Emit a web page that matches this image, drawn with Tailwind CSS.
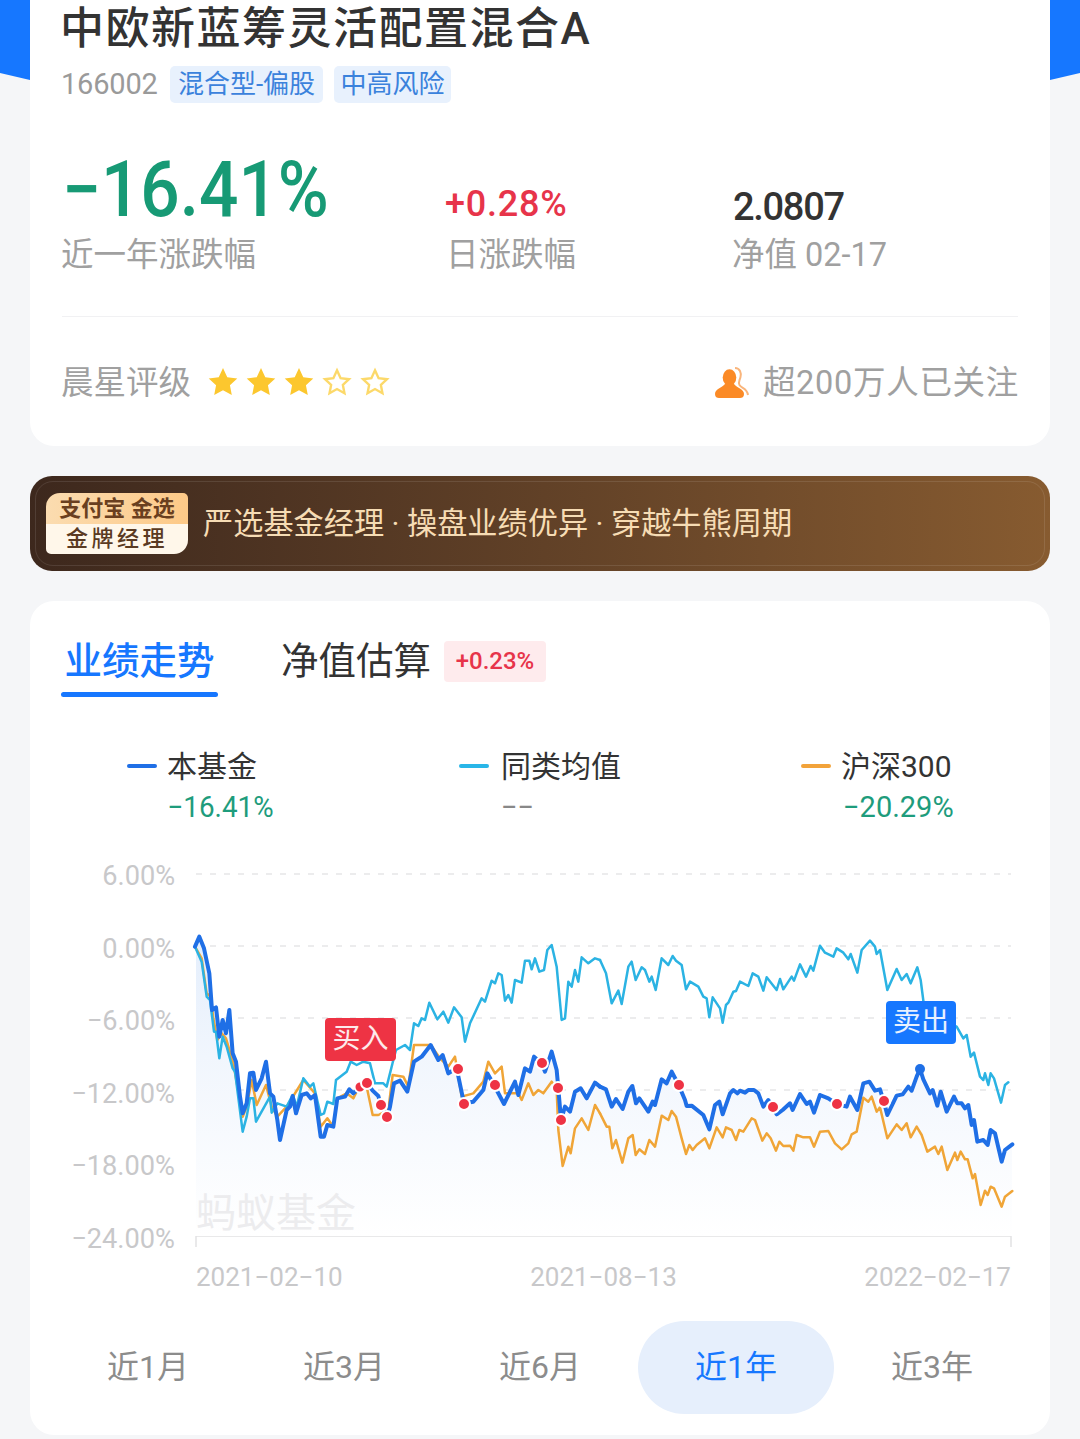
<!DOCTYPE html>
<html lang="zh-CN">
<head>
<meta charset="utf-8">
<script src="https://cdn.jsdelivr.net/npm/@tailwindcss/browser@4"></script>
</head>
<body class="m-0">
<div class="relative w-[1080px] h-[1439px] overflow-hidden bg-[#f5f6f8] font-['Roboto','Noto_Sans_CJK_SC',sans-serif] px-[30px]">
  <svg class="absolute left-0 top-0" width="1080" height="82" viewBox="0 0 1080 82"><polygon points="0,0 30,0 30,80 0,73" fill="#1677ff"/><polygon points="1050,0 1080,0 1080,73 1050,80" fill="#1677ff"/></svg>

  <section class="relative h-[446px] bg-white rounded-b-[24px] px-[32px]">
    <h1 class="h-[60px] leading-[58px] text-[44px] tracking-[1.5px] font-medium text-[#333] whitespace-nowrap -ml-[2px]">中欧新蓝筹灵活配置混合A</h1>
    <div class="flex items-center h-[37px] mt-[6px]">
      <span class="text-[29px] text-[#9a9a9a] w-[108px] -ml-[1px] mr-[1px] tracking-[-0.2px]">166002</span>
      <span class="h-[37px] w-[153px] leading-[37px] text-center rounded-[5px] bg-[#e8f1fd] text-[#3b82dc] text-[26px] whitespace-nowrap">混合型-偏股</span>
      <span class="h-[37px] w-[117px] leading-[37px] text-center ml-[11px] rounded-[5px] bg-[#e8f1fd] text-[#3b82dc] text-[26px] whitespace-nowrap">中高风险</span>
    </div>
    <div class="grid grid-cols-[384px_287px_1fr] items-end mt-[39px] h-[96px]">
      <div class="text-[77px] leading-[96px] font-medium text-[#179a75] whitespace-nowrap origin-left scale-x-90">−16.41%</div>
      <div class="text-[36px] leading-[60px] font-medium text-[#e7344a] pb-[4px] tracking-[0.8px] -ml-[1px]">+0.28%</div>
      <div class="text-[38px] leading-[60px] font-medium text-[#333] pb-[1px] tracking-[-1.300px]">2.0807</div>
    </div>
    <div class="grid grid-cols-[385px_286px_1fr] text-[32.500px] leading-[48px] text-[#a0a0a0] -mt-[7px] -ml-[1px]">
      <span class="whitespace-nowrap">近一年涨跌幅</span>
      <span class="whitespace-nowrap">日涨跌幅</span>
      <span class="whitespace-nowrap">净值 02-17</span>
    </div>
    <div class="h-px bg-[#f1f1f3] mt-[37px]"></div>
    <div class="flex items-center justify-between mt-[42px] h-[48px]">
      <div class="flex items-center">
        <span class="text-[32.500px] text-[#a0a0a0] w-[146px] whitespace-nowrap -ml-[1px]">晨星评级</span>
        <div class="flex gap-[6px] -mt-[3px]">
          <svg width="32" height="32" viewBox="0 0 24 24"><path d="M12 1.5l3.2 6.9 7.5.9-5.5 5.1 1.4 7.4L12 18.200l-6.600 3.600 1.400-7.400-5.500-5.100 7.500-.9z" fill="#fcc72e"/></svg>
          <svg width="32" height="32" viewBox="0 0 24 24"><path d="M12 1.5l3.2 6.9 7.5.9-5.500 5.100 1.400 7.400L12 18.200l-6.600 3.600 1.400-7.400-5.500-5.100 7.500-.9z" fill="#fcc72e"/></svg>
          <svg width="32" height="32" viewBox="0 0 24 24"><path d="M12 1.5l3.2 6.9 7.5.9-5.500 5.100 1.400 7.400L12 18.200l-6.600 3.600 1.400-7.400-5.500-5.100 7.500-.9z" fill="#fcc72e"/></svg>
          <svg width="32" height="32" viewBox="0 0 24 24"><path d="M12 3.200l2.700 5.900 6.300.8-4.600 4.300 1.200 6.200L12 17.300l-5.600 3.100 1.200-6.200L3 9.900l6.300-.8z" fill="none" stroke="#fcd96a" stroke-width="1.800"/></svg>
          <svg width="32" height="32" viewBox="0 0 24 24"><path d="M12 3.200l2.700 5.900 6.300.8-4.600 4.300 1.200 6.200L12 17.300l-5.600 3.100 1.200-6.200L3 9.900l6.300-.8z" fill="none" stroke="#fcd96a" stroke-width="1.800"/></svg>
        </div>
      </div>
      <div class="flex items-center">
        <svg width="34" height="32" viewBox="0 0 34 32" class="mr-[14px]">
          <path d="M20 1C25 1 26.500 6 25.500 10C24.500 14 23 15 24.500 18C26.500 21.500 32 21 33 28" fill="none" stroke="#f9b57c" stroke-width="2"/>
          <ellipse cx="14.500" cy="10.500" rx="6.800" ry="8.300" fill="#fb8a26"/>
          <path d="M0 27C0 22 6 21.500 10 17L19 17C22.500 21.500 29 22 29 27C29 30 27 31 25 31L4 31C2 31 0 30 0 27Z" fill="#fb8a26"/>
        </svg>
        <span class="text-[32.500px] text-[#a0a0a0] whitespace-nowrap tracking-[0.700px] -mr-[1px]">超200万人已关注</span>
      </div>
    </div>
  </section>

  <section class="relative mt-[30px] h-[95px] rounded-[22px] bg-gradient-to-r from-[#3d281d] to-[#875b30] flex items-center pl-[16px]">
    <div class="absolute inset-[5px] rounded-[18px] border border-white/10"></div>
    <div class="relative w-[142px] h-[61px] rounded-tl-[14px] rounded-br-[14px] rounded-tr-[5px] rounded-bl-[5px] overflow-hidden flex flex-col text-center whitespace-nowrap">
      <div class="h-[31px] leading-[31px] bg-gradient-to-r from-[#fbdcb0] to-[#fdc987] text-[22px] font-bold text-[#6a3f1f]">支付宝 金选</div>
      <div class="h-[30px] leading-[30px] bg-[#fff7ea] text-[22px] tracking-[3.500px] font-medium text-[#5a3a22]">金牌经理</div>
    </div>
    <div class="relative ml-[15px] text-[30.200px] text-[#f6dcb4] whitespace-nowrap">严选基金经理 · 操盘业绩优异 · 穿越牛熊周期</div>
  </section>

  <section class="relative mt-[30px] h-[834px] bg-white rounded-[24px] overflow-hidden">
    <div class="flex items-center h-[61px] mt-[30px] pl-[31px]">
      <div class="relative w-[157px] text-center text-[37.500px] font-medium text-[#1677ff] leading-[61px] whitespace-nowrap">业绩走势
        <span class="absolute left-0 right-0 top-[61px] h-[5px] rounded-full bg-[#1677ff]"></span>
      </div>
      <div class="ml-[63px] text-[37.500px] text-[#333] leading-[61px] whitespace-nowrap">净值估算</div>
      <div class="ml-[13px] h-[41px] w-[102px] leading-[41px] text-center rounded-[4px] bg-[#feebed] text-[#e7344a] text-[24px] font-medium">+0.23%</div>
    </div>
    <div class="grid grid-cols-[332px_342px_1fr] pl-[97px] mt-[54px]">
      <div>
        <div class="flex items-center h-[40px] text-[30px] text-[#333]"><i class="w-[30px] h-[4px] rounded-full bg-[#1f6fe6] mr-[10px]"></i>本基金</div>
        <div class="pl-[40px] text-[29px] leading-[42px] text-[#1e9c7c] origin-left scale-x-[.96] ml-[2px]">−16.41%</div>
      </div>
      <div>
        <div class="flex items-center h-[40px] text-[30px] text-[#333]"><i class="w-[30px] h-[4px] rounded-full bg-[#29b6e8] mr-[12px]"></i>同类均值</div>
        <div class="pl-[42px] text-[29px] leading-[42px] text-[#888]">−−</div>
      </div>
      <div>
        <div class="flex items-center h-[40px] text-[30px] text-[#333]"><i class="w-[30px] h-[4px] rounded-full bg-[#f2a33a] mr-[10px]"></i>沪深300</div>
        <div class="pl-[40px] text-[29px] leading-[42px] text-[#1e9c7c] ml-[2px] whitespace-nowrap">−20.29%</div>
      </div>
    </div>

    <div class="relative h-[474px] mt-[22px]">
      <svg class="absolute left-[-30px] top-[-850px]" width="1080" height="1439" viewBox="0 0 1080 1439">
        <defs>
          <linearGradient id="area" x1="0" y1="0" x2="0" y2="1"><stop offset="0" stop-color="#e4eefc"/><stop offset="0.4" stop-color="#f1f6fd"/><stop offset="1" stop-color="#ffffff"/></linearGradient>
        </defs>
        <g stroke="#e6e6e8" stroke-width="1.500" stroke-dasharray="6 8">
          <line x1="196" x2="1011" y1="874" y2="874"/>
          <line x1="196" x2="1011" y1="946" y2="946"/>
          <line x1="196" x2="1011" y1="1018" y2="1018"/>
          <line x1="196" x2="1011" y1="1090" y2="1090"/>
          <line x1="196" x2="1011" y1="1163" y2="1163"/>
        </g>
        <path d="M196 1236H1011M196 1236V1247M1011 1236V1247" stroke="#e2e2e4" stroke-width="1.500" fill="none"/>
        <path d="M196 946L199 937L204 945L209 973L212 1010L216 1007L219 1037L223 1020L226 1033L229 1010L233 1053L236 1062L240 1097L243 1113L247 1103L250 1073L253 1073L256 1090L262 1078L266 1062L270 1093L273 1097L277 1120L280 1140L287 1110L290 1107L293 1096L296 1113L302 1095L307 1093L311 1098L315 1095L321 1137L324 1137L327 1125L333 1127L337 1098L345 1097L349 1089L353 1093L360 1087L367 1083L373 1091L378 1096L381 1105L387 1117L390 1107L394 1083L400 1081L407 1092L414 1062L422 1057L431 1045L438 1060L443 1055L448 1073L457 1069L464 1103L473 1102L483 1090L487 1073L495 1085L504 1104L515 1082L518 1095L525 1068L530 1072L534 1057L542 1063L545 1072L552 1052L557 1070L558 1088L561 1120L565 1107L570 1112L575 1092L581 1088L587 1098L595 1083L603 1087L610 1095L612 1107L616 1099L623 1109L628 1092L632 1086L636 1103L639 1098L648 1112L653 1102L655 1105L662 1079L667 1083L672 1072L679 1085L685 1100L687 1106L692 1106L703 1115L709 1129L715 1105L719 1102L723 1114L730 1093L733 1090L737 1093L740 1091L745 1093L748 1090L754 1090L758 1093L763 1107L768 1100L773 1107L777 1114L783 1110L790 1103L793 1110L800 1094L807 1104L810 1102L814 1113L820 1095L828 1098L837 1104L847 1107L850 1097L857 1110L863 1083L869 1082L875 1091L880 1089L884 1101L887 1115L897 1096L903 1094L908 1087L912 1091L917 1077L920 1069L923 1079L930 1093L933 1090L937 1106L941 1092L947 1112L954 1097L957 1103L962 1103L965 1108L968 1105L972 1125L974 1120L977 1142L983 1140L988 1145L991 1130L995 1133L1002 1162L1005 1150L1012 1144V1236H196Z" fill="url(#area)"/>
        <g fill="none" stroke-linejoin="round" stroke-linecap="round">
          <g transform="translate(190 930) scale(.33333)" stroke="#f0a537" stroke-width="7.500">
            <polyline points="15,50 35,85 50,190 62,200 70,265 82,330 95,310 108,325 130,400 158,560 170,530 185,450 200,525 228,465 245,530 262,560 290,530 340,450 375,490 392,590 412,565 430,590 442,505 470,490 490,505 510,465 530,470 548,555 565,555 595,540 608,435 640,440 655,470 672,345 722,345 750,385 775,410 795,380 815,500 850,490 880,455 895,395 915,430 935,410 945,490 985,490 995,510 1015,460 1030,495 1045,480 1060,490 1085,455 1100,480 1105,600 1118,708 1135,650 1142,670 1155,595 1175,565 1195,600 1215,525 1230,550"/>
          </g>
          <g transform="translate(600 930) scale(.33333)" stroke="#f0a537" stroke-width="7.500">
            <polyline points="0,550 20,590 28,590 37,655 48,630 67,698 85,625 98,615 107,675 118,658 135,672 148,630 165,650 185,557 205,570 215,543 228,560 245,625 258,672 268,645 278,660 290,645 315,625 328,655 350,592 368,622 378,592 395,600 408,630 418,600 430,605 455,565 465,570 487,632 500,610 512,625 528,662 538,635 550,648 570,647 580,662 590,615 610,622 630,622 642,650 660,605 685,603 705,640 725,658 745,640 755,613 770,605 790,503 805,515 815,500 830,545 840,532 862,625 890,583 905,600 920,580 932,622 950,590 965,615 982,665 1005,650 1015,672 1025,650 1042,720 1065,668 1072,690 1082,665 1095,688 1103,688 1118,745 1125,732 1142,825 1155,782 1163,795 1172,770 1182,775 1205,830 1215,800 1237,783"/>
          </g>
          <g transform="translate(190 930) scale(.33333)" stroke="#2bb3e3" stroke-width="7.500">
            <polyline points="15,50 35,95 50,200 60,210 72,305 78,305 88,385 98,320 110,350 128,415 135,425 158,605 170,560 180,505 190,505 198,575 240,500 245,548 262,520 290,530 308,495 320,530 340,445 360,470 370,460 392,555 402,550 412,515 430,522 438,450 470,425 482,395 500,405 520,395 540,400 555,460 580,460 590,470 610,390 618,360 645,345 660,360 672,280 685,288 695,265 705,270 718,218 742,268 760,245 775,278 792,232 815,262 825,335 840,280 875,205 885,215 905,152 915,160 925,130 935,135 945,212 955,195 965,218 975,150 995,158 1005,92 1018,92 1025,118 1035,85 1048,125 1062,120 1072,60 1085,45 1100,110 1115,270 1125,265 1135,155 1145,170 1155,120 1165,155 1175,82 1195,100 1215,85 1230,90"/>
          </g>
          <g transform="translate(600 930) scale(.33333)" stroke="#2bb3e3" stroke-width="7.500">
            <polyline points="0,90 18,130 35,220 55,182 65,222 85,110 95,95 107,150 125,112 135,120 148,155 155,140 167,180 185,85 205,105 218,78 228,92 245,105 258,178 270,155 295,170 310,200 320,205 328,262 338,202 360,235 368,278 378,225 385,218 400,185 408,183 420,155 445,168 458,130 475,140 490,182 500,142 530,180 540,147 550,178 575,140 582,152 600,103 618,140 632,108 640,122 660,47 675,68 700,80 710,55 730,68 745,88 752,72 772,128 785,60 810,32 825,50 830,72 840,60 862,180 890,117 905,150 920,132 932,160 952,112 962,150 975,250 1070,290 1090,325 1100,315 1112,380 1122,368 1140,440 1150,450 1155,430 1165,465 1172,430 1182,445 1203,518 1215,465 1225,457"/>
          </g>
          <g transform="translate(190 930) scale(.33333)" stroke="#1f6fe6" stroke-width="12">
            <polyline points="15,50 28,20 42,55 58,130 66,240 78,232 88,320 98,270 108,310 118,240 128,370 138,395 150,500 158,550 170,520 180,430 190,428 198,480 215,445 228,395 240,490 250,500 262,570 270,630 290,540 300,530 308,498 318,550 335,495 350,490 362,505 375,495 392,620 402,620 412,585 430,590 442,505 465,500 478,478 490,490 510,472 532,460 548,482 565,498 572,525 592,560 600,530 612,460 630,452 652,485 672,395 695,380 722,345 745,390 758,375 775,430 800,415 822,520 850,515 880,480 892,430 912,465 942,522 975,455 985,495 1005,415 1020,425 1032,380 1055,400 1065,425 1085,365 1100,420 1105,475 1113,570 1125,530 1140,545 1155,485 1172,475 1190,505 1215,458 1230,470"/>
          </g>
          <g transform="translate(600 930) scale(.33333)" stroke="#1f6fe6" stroke-width="12">
            <polyline points="0,470 18,478 35,530 48,507 68,537 85,485 97,468 108,520 118,505 145,545 158,515 165,525 185,448 200,460 215,425 236,465 255,510 260,528 275,527 310,555 328,598 345,525 358,515 368,553 390,490 400,480 412,490 420,482 435,488 445,480 462,480 475,490 490,530 505,510 518,530 530,553 548,540 570,520 578,540 600,492 620,522 630,515 642,548 660,495 685,505 710,522 740,530 750,500 772,540 790,460 808,455 825,482 840,478 851,513 862,555 890,497 908,493 925,470 935,482 950,440 960,417 970,448 990,490 998,480 1012,527 1022,485 1040,545 1062,500 1072,520 1085,520 1095,535 1105,525 1115,585 1122,570 1132,635 1150,630 1163,645 1172,600 1185,610 1205,695 1215,660 1237,643"/>
          </g>
        </g>
        <g fill="#ee3344" stroke="#fff" stroke-width="2">
          <circle cx="360" cy="1087" r="5.500"/><circle cx="367" cy="1083" r="6"/><circle cx="381" cy="1105" r="6"/><circle cx="387" cy="1117" r="6"/>
          <circle cx="458" cy="1069" r="6"/><circle cx="464" cy="1104" r="6"/><circle cx="495" cy="1085" r="6"/><circle cx="542" cy="1063" r="6"/>
          <circle cx="558" cy="1088" r="6"/><circle cx="561" cy="1120" r="6"/><circle cx="679" cy="1085" r="6"/><circle cx="773" cy="1107" r="6"/>
          <circle cx="837" cy="1104" r="6"/><circle cx="884" cy="1101" r="6"/>
        </g>
        <circle cx="920" cy="1069" r="5" fill="#1f6fe6"/>
      </svg>

      <div class="absolute left-0 top-[12px] w-[145px] h-[391px] flex flex-col justify-between items-end text-[28px] text-[#c8c8ca] leading-[28px]">
        <span class="origin-right scale-x-[.97]">6.00%</span><span class="origin-right scale-x-[.97]">0.00%</span><span class="origin-right scale-x-[.97]">−6.00%</span><span class="origin-right scale-x-[.97]">−12.00%</span><span class="origin-right scale-x-[.97]">−18.00%</span><span class="origin-right scale-x-[.97]">−24.00%</span>
      </div>
      <div class="absolute left-[166px] top-[339px] text-[40px] leading-[50px] text-[#ececee]">蚂蚁基金</div>
      <div class="absolute left-[295px] top-[168px] w-[71px] h-[43px] leading-[42px] text-center rounded-[4px] bg-[#ee3344] text-white/90 text-[28px]">买入</div>
      <div class="absolute left-[856px] top-[151px] w-[70px] h-[43px] leading-[42px] text-center rounded-[4px] bg-[#1677ff] text-white/90 text-[28px]">卖出</div>
      <div class="absolute left-[166px] right-[39px] top-[412px] flex justify-between text-[26px] leading-[30px] text-[#c8c8ca]">
        <span>2021−02−10</span><span>2021−08−13</span><span>2022−02−17</span>
      </div>
    </div>

    <div class="absolute left-[20px] top-[720px] grid grid-cols-[196px_196px_196px_196px_196px] text-center text-[32px] leading-[93px] text-[#8c8c8c]">
      <span>近1月</span><span>近3月</span><span>近6月</span>
      <span class="rounded-full bg-[#e6effc] text-[#1677ff]">近1年</span>
      <span>近3年</span>
    </div>
  </section>
</div>
</body>
</html>
